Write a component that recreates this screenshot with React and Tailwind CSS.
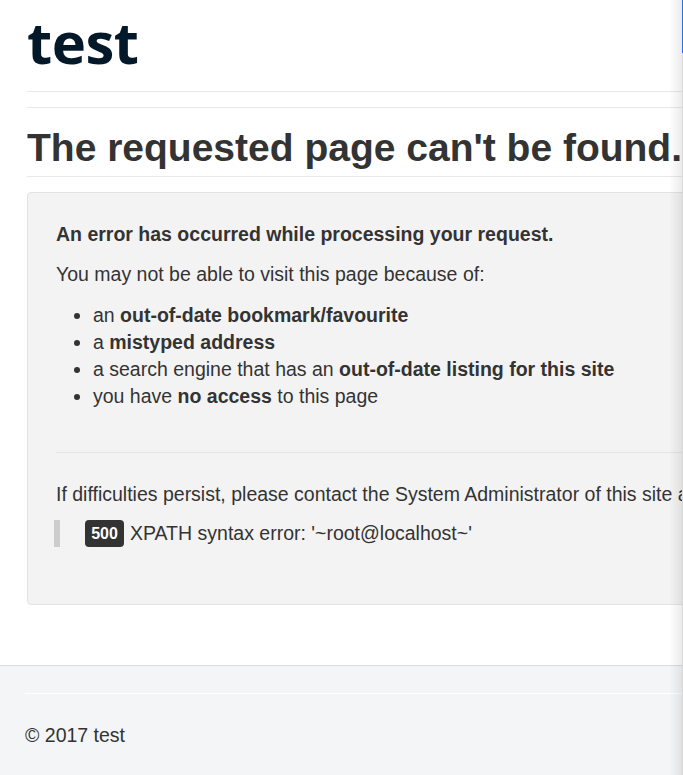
export default function App() {
  return (
    <div className="relative w-[683px] h-[775px] overflow-hidden bg-white font-['Liberation_Sans',Arial,sans-serif] text-[#333]">
      <div className="w-[1000px]">
        <div className="pl-[27px]">
          <div className="h-[91px] pt-[2px]">
            <div className="font-['Open_Sans',sans-serif] font-bold text-[58px] leading-[80px] text-[#03192a] tracking-[-0.5px]">test</div>
          </div>
          <div className="h-px bg-[#e8e8e8]" />
          <div className="h-[15px]" />
          <div className="h-px bg-[#e8e8e8]" />
          <h1 className="mt-[16px] font-bold text-[39px] leading-[48px] text-[#333]">The requested page can&apos;t be found.</h1>
          <div className="mt-[4px] h-px bg-[#e8e8e8]" />
          <div className="mt-[15px] h-[413px] rounded-[4px] border border-[#e3e3e3] bg-[#f3f3f3] pl-[28px] pt-[26px]">
            <p className="font-bold text-[19.5px] leading-[30px]">An error has occurred while processing your request.</p>
            <p className="mt-[10px] text-[19.5px] leading-[30px]">You may not be able to visit this page because of:</p>
            <ul className="mt-[13px] list-disc pl-[37px] text-[19.5px] leading-[27px]">
              <li>an <b>out-of-date bookmark/favourite</b></li>
              <li>a <b>mistyped address</b></li>
              <li>a search engine that has an <b>out-of-date listing for this site</b></li>
              <li>you have <b>no access</b> to this page</li>
            </ul>
            <div className="mt-[42px] h-px bg-[#e5e5e5]" />
            <p className="mt-[26px] whitespace-nowrap text-[19.5px] leading-[30px]">If difficulties persist, please contact the System Administrator of this site and report the error below.</p>
            <div className="-ml-[2px] mt-[11px] flex h-[27px] items-center border-l-[6px] border-[#cccccc] pl-[25px]">
              <span className="mr-[6px] inline-flex h-[27px] w-[39px] items-center justify-center rounded-[4px] bg-[#333] text-[16px] font-bold text-white">500</span>
              <span className="text-[19.5px] leading-[27px]">XPATH syntax error: &apos;~root@localhost~&apos;</span>
            </div>
          </div>
        </div>
        <footer className="mt-[60px] h-[200px] border-t border-[#dcdcdc] bg-[#f4f5f7] pl-[25px]">
          <div className="mt-[27px] h-px bg-white" />
          <p className="mt-[26px] text-[19.5px] leading-[30px]">© 2017 test</p>
        </footer>
      </div>
      <div className="absolute right-px top-0 h-full w-[13px] bg-gradient-to-r from-transparent to-[rgba(0,0,0,0.08)]" />
      <div className="absolute right-0 top-0 h-full w-px bg-[#d8d8d8]" />
      <div className="absolute right-0 top-0 h-[53px] w-px bg-[#1a73e8]" />
    </div>
  );
}
